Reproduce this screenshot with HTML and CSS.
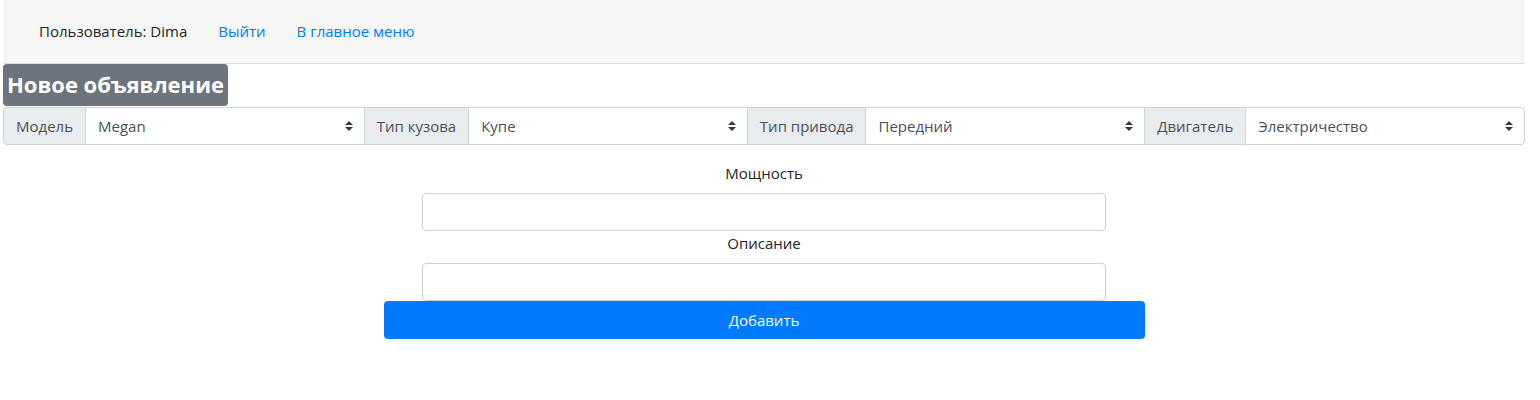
FILE: index.html
```html
<!DOCTYPE html>
<html lang="ru">
<head>
<meta charset="utf-8">
<title>Новое объявление</title>
<link rel="stylesheet" href="styles.css">
</head>
<body>
<div class="page">
  <nav class="navbar">
    <span class="user">Пользователь: Dima</span>
    <a class="nav-link" href="#">Выйти</a>
    <a class="nav-link" href="#">В главное меню</a>
  </nav>
  <h3 class="title"><span class="badge">Новое объявление</span></h3>
  <div class="input-group">
    <span class="prepend first">Модель</span>
    <div class="select-wrap">
      <select class="custom-select"><option>Megan</option></select>
      <svg class="arrow" viewBox="0 0 4 5" width="8" height="10"><path d="M2 0L0 2h4zm0 5L0 3h4z" fill="#343a40"/></svg>
    </div>
    <span class="prepend">Тип кузова</span>
    <div class="select-wrap">
      <select class="custom-select"><option>Купе</option></select>
      <svg class="arrow" viewBox="0 0 4 5" width="8" height="10"><path d="M2 0L0 2h4zm0 5L0 3h4z" fill="#343a40"/></svg>
    </div>
    <span class="prepend">Тип привода</span>
    <div class="select-wrap">
      <select class="custom-select"><option>Передний</option></select>
      <svg class="arrow" viewBox="0 0 4 5" width="8" height="10"><path d="M2 0L0 2h4zm0 5L0 3h4z" fill="#343a40"/></svg>
    </div>
    <span class="prepend">Двигатель</span>
    <div class="select-wrap last">
      <select class="custom-select"><option>Электричество</option></select>
      <svg class="arrow" viewBox="0 0 4 5" width="8" height="10"><path d="M2 0L0 2h4zm0 5L0 3h4z" fill="#343a40"/></svg>
    </div>
  </div>
  <form class="form">
    <label class="label" for="power">Мощность</label>
    <input class="form-control" id="power" type="text">
    <label class="label" for="desc">Описание</label>
    <input class="form-control" id="desc" type="text">
    <button class="btn" type="button">Добавить</button>
  </form>
</div>
</body>
</html>
```
FILE: styles.css
```css
* { box-sizing: border-box; }
body {
  margin: 0;
  font-family: "Open Sans", "Noto Sans", sans-serif;
  font-size: 15px;
  color: #212529;
  background: #fff;
}
.page {
  width: 1522px;
  margin-left: 3px;
}
.navbar {
  height: 64px;
  background: #f6f6f6;
  border-bottom: 1px solid #dcdcdc;
  display: flex;
  align-items: center;
  padding: 0 0 2px 36px;
  gap: 31px;
  line-height: 24px;
}
.user { color: #212529; }
.nav-link {
  color: #007bff;
  text-decoration: none;
}
.title {
  margin: 0 0 1px;
  display: flex;
}
.badge {
  display: flex;
  align-items: center;
  height: 42px;
  padding: 0 4px 3px;
  background: #6c757d;
  color: #fff;
  border-radius: 4px;
  font-size: 22px;
  font-weight: 700;
}
.input-group {
  display: flex;
  height: 38px;
}
.prepend {
  display: flex;
  align-items: center;
  padding: 0 12px;
  background: #e9ecef;
  border: 1px solid #ced4da;
  color: #495057;
  margin-right: -1px;
  white-space: nowrap;
}
.prepend.first { border-radius: 4px 0 0 4px; }
.select-wrap {
  position: relative;
  flex: 1 1 0;
  min-width: 0;
  margin-right: -1px;
}
.select-wrap.last { margin-right: 0; }
.custom-select {
  display: block;
  width: 100%;
  height: 38px;
  margin: 0;
  padding: 0 28px 0 12px;
  border: 1px solid #ced4da;
  border-radius: 0;
  background: #fff;
  color: #495057;
  font-family: inherit;
  font-size: 15px;
  -webkit-appearance: none;
  appearance: none;
  outline: none;
}
.select-wrap.last .custom-select { border-radius: 0 4px 4px 0; }
.arrow {
  position: absolute;
  right: 12px;
  top: 14px;
  pointer-events: none;
}
.form {
  display: flex;
  flex-direction: column;
  align-items: center;
  margin: 16px 0 0;
}
.label {
  display: block;
  line-height: 24px;
  margin-bottom: 8px;
  color: #212529;
}
.form-control {
  display: block;
  width: 45%;
  height: 38px;
  margin: 0;
  border: 1px solid #ced4da;
  border-radius: 4px;
  padding: 0 12px;
  font-family: inherit;
  font-size: 15px;
  color: #495057;
  background: #fff;
}
.btn {
  display: block;
  width: 50%;
  height: 38px;
  margin: 0;
  border: none;
  border-radius: 4px;
  background: #007bff;
  color: #fff;
  font-family: inherit;
  font-size: 15px;
  line-height: 24px;
  cursor: pointer;
}
```
